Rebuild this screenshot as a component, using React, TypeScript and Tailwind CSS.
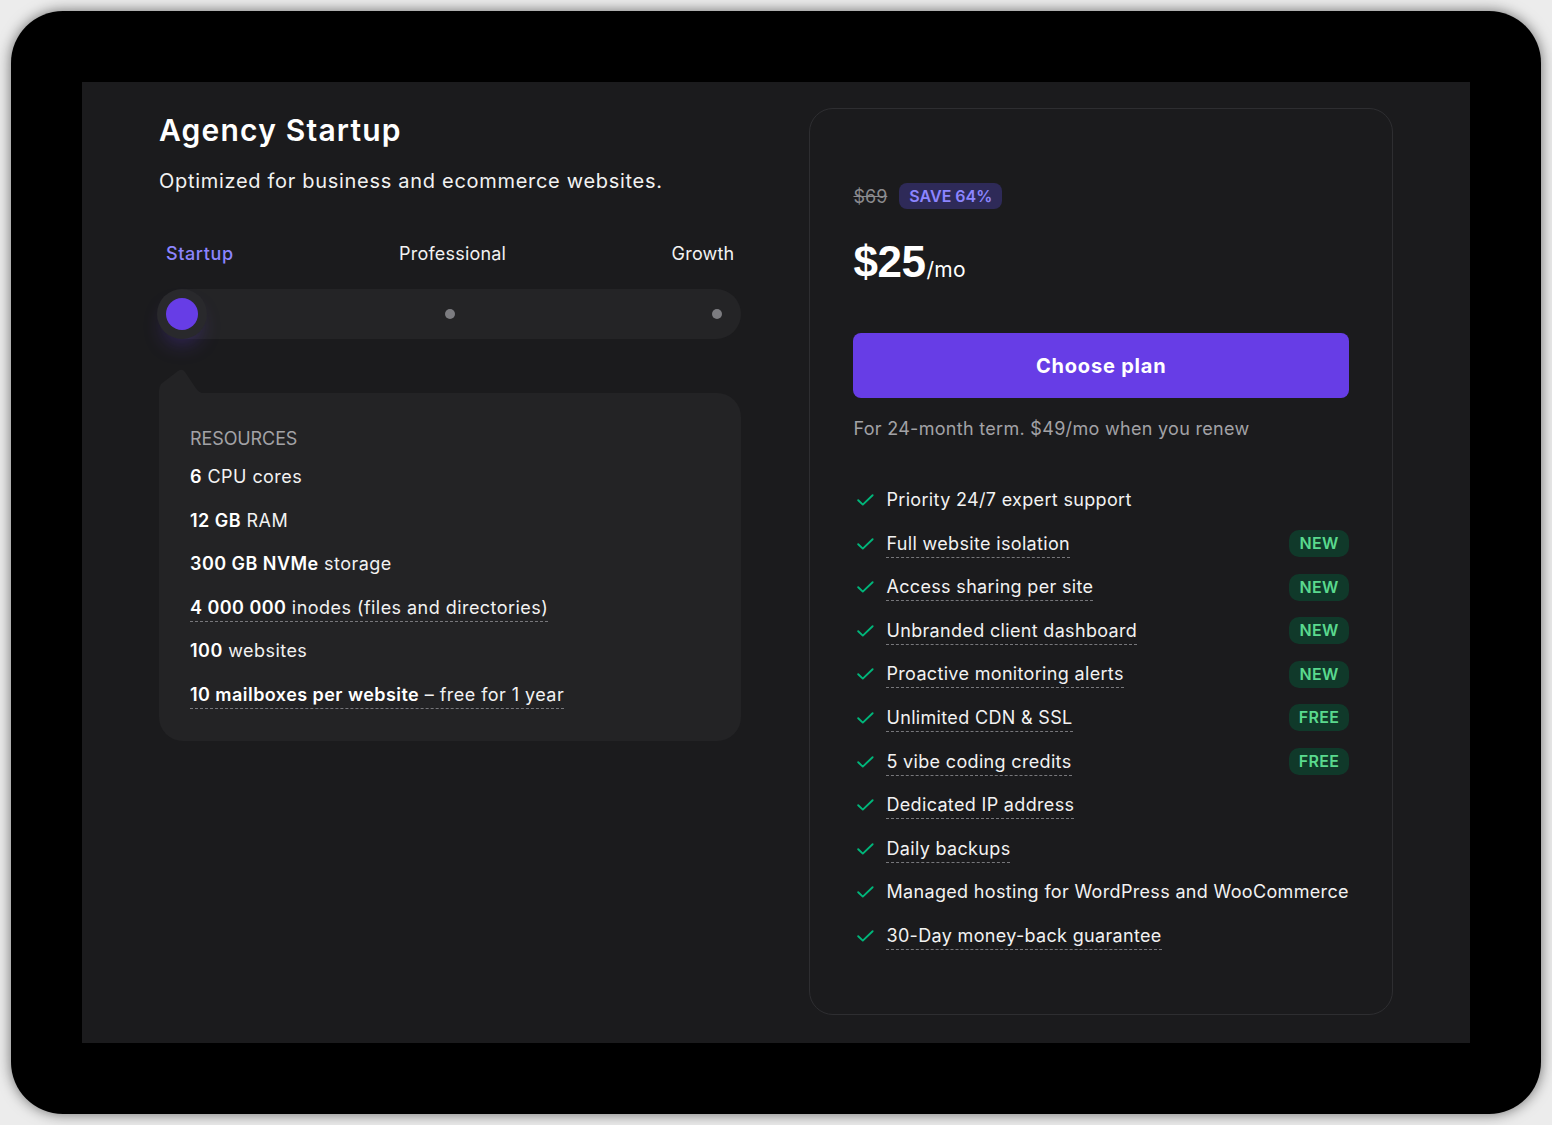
const resources: { bold: string; rest: string; dashed?: boolean }[] = [
  { bold: '6', rest: ' CPU cores' },
  { bold: '12 GB', rest: ' RAM' },
  { bold: '300 GB NVMe', rest: ' storage' },
  { bold: '4 000 000', rest: ' inodes (files and directories)', dashed: true },
  { bold: '100', rest: ' websites' },
  { bold: '10 mailboxes per website', rest: ' – free for 1 year', dashed: true },
];

const features: { label: string; dashed: boolean; badge?: string }[] = [
  { label: 'Priority 24/7 expert support', dashed: false },
  { label: 'Full website isolation', dashed: true, badge: 'NEW' },
  { label: 'Access sharing per site', dashed: true, badge: 'NEW' },
  { label: 'Unbranded client dashboard', dashed: true, badge: 'NEW' },
  { label: 'Proactive monitoring alerts', dashed: true, badge: 'NEW' },
  { label: 'Unlimited CDN & SSL', dashed: true, badge: 'FREE' },
  { label: '5 vibe coding credits', dashed: true, badge: 'FREE' },
  { label: 'Dedicated IP address', dashed: true },
  { label: 'Daily backups', dashed: true },
  { label: 'Managed hosting for WordPress and WooCommerce', dashed: false },
  { label: '30-Day money-back guarantee', dashed: true },
];

function CheckMark() {
  return (
    <svg width="17" height="12" viewBox="0 0 17 12" fill="none" className="shrink-0">
      <path d="M1.2 6.2 L5.8 10.6 L15.6 1.2" stroke="#00b67a" strokeWidth="1.9" strokeLinecap="round" strokeLinejoin="round" />
    </svg>
  );
}

export default function App() {
  return (
    <div
      className="w-[1552px] h-[1125px] bg-[#ececec] p-[11px]"
      style={{ fontFamily: 'Inter, "Noto Sans", sans-serif' }}
    >
      <div className="h-full bg-black rounded-[52px] p-[71px] shadow-[0_0_14px_rgba(0,0,0,0.55)]">
        <div className="h-full bg-[#1b1b1d] flex items-start gap-[68px] px-[77px] pt-[26px]">
          {/* Left column */}
          <div className="w-[583px] mt-[4px]">
            <h1 className="text-[30px] leading-[36px] font-semibold text-white tracking-[1.2px]">Agency Startup</h1>
            <p className="mt-[19px] text-[20px] leading-[28px] text-[#f2f2f2] tracking-[0.7px]">
              Optimized for business and ecommerce websites.
            </p>

            {/* Plan tabs */}
            <div className="mt-[47px] flex justify-between px-[7px] text-[18px] leading-[24px] tracking-[0.2px]">
              <span className="text-[#8c85ff] font-medium tracking-[0.6px]">Startup</span>
              <span className="text-[#f2f2f2]">Professional</span>
              <span className="text-[#f2f2f2]">Growth</span>
            </div>

            {/* Slider */}
            <div className="mt-[23px] h-[50px] rounded-full bg-[#242426] flex items-center">
              <div className="flex-1 flex justify-start">
                <div className="ml-[7px] w-[32px] h-[32px] rounded-full bg-[#673de6] shadow-[0_0_0_9px_#29292c,0_12px_22px_rgba(103,61,230,0.4)]" />
              </div>
              <div className="flex-1 flex justify-center">
                <div className="w-[10px] h-[10px] rounded-full bg-[#7c7c80]" />
              </div>
              <div className="flex-1 flex justify-end">
                <div className="mr-[19px] w-[10px] h-[10px] rounded-full bg-[#7c7c80]" />
              </div>
            </div>

            {/* Resources card */}
            <div className="relative mt-[54px] rounded-[24px] rounded-tl-none bg-[#232325] px-[31px] pt-[34px] pb-[34px]">
              <svg className="absolute left-0 top-[-24px]" width="44" height="28" viewBox="0 0 44 28">
                <path d="M0 28 L0 22 Q0 18 2 15 L19 2 Q23 -1 26 3 L36 18 Q40 24 44 24 L44 28 Z" fill="#232325" />
              </svg>
              <div className="text-[18px] leading-[24px] text-[#a2a2a6] tracking-[-0.1px]">RESOURCES</div>
              <div className="mt-[14px] flex flex-col gap-[19.6px]">
                {resources.map((r) => (
                  <div key={r.bold} className="h-[24px] text-[18px] leading-[24px] text-[#f2f2f2] tracking-[0.45px]">
                    <span className={r.dashed ? 'inline-block border-b border-dashed border-[#77777b] pb-[1px]' : ''}>
                      <span className="font-semibold text-white">{r.bold}</span>
                      {r.rest}
                    </span>
                  </div>
                ))}
              </div>
            </div>
          </div>

          {/* Right card */}
          <div className="w-[584px] h-[907px] rounded-[24px] border border-[#2e2e31] px-[43px] pt-[74px]">
            <div className="flex items-center h-[26px] gap-[12px]">
              <span className="text-[18px] text-[#8a8a8e] line-through">$69</span>
              <span className="h-[26px] px-[10px] rounded-[8px] bg-[#2e2a58] text-[#8c85ff] text-[16px] leading-[26px] font-semibold">
                SAVE 64%
              </span>
            </div>
            <div className="mt-[31px] flex items-baseline text-white leading-none">
              <span className="text-[44px] font-semibold tracking-[-0.5px]" style={{ fontFamily: '"Liberation Sans", Arial, sans-serif' }}>
                $25
              </span>
              <span className="text-[21px] ml-[1px] tracking-[0.3px]">/mo</span>
            </div>
            <button className="mt-[49px] w-full h-[65px] rounded-[8px] bg-[#673de6] text-white text-[20px] font-bold tracking-[0.8px]">
              Choose plan
            </button>
            <p className="mt-[19px] text-[18px] leading-[24px] text-[#a2a2a6] tracking-[0.3px]">
              For 24-month term. $49/mo when you renew
            </p>

            <div className="mt-[47px] flex flex-col gap-[19.6px]">
              {features.map((f) => (
                <div key={f.label} className="h-[24px] flex items-center">
                  <div className="ml-[4px]">
                    <CheckMark />
                  </div>
                  <span
                    className={
                      'ml-[12px] text-[18px] leading-[24px] text-[#f2f2f2] tracking-[0.33px] ' +
                      (f.dashed ? 'border-b border-dashed border-[#77777b] pb-[1px] mt-[2px]' : '')
                    }
                  >
                    {f.label}
                  </span>
                  {f.badge && (
                    <span className="ml-auto h-[27px] w-[60px] rounded-[10px] bg-[#10392a] text-[#5ad98e] text-[16px] leading-[27px] font-semibold text-center tracking-[0.3px]">
                      {f.badge}
                    </span>
                  )}
                </div>
              ))}
            </div>
          </div>
        </div>
      </div>
    </div>
  );
}
